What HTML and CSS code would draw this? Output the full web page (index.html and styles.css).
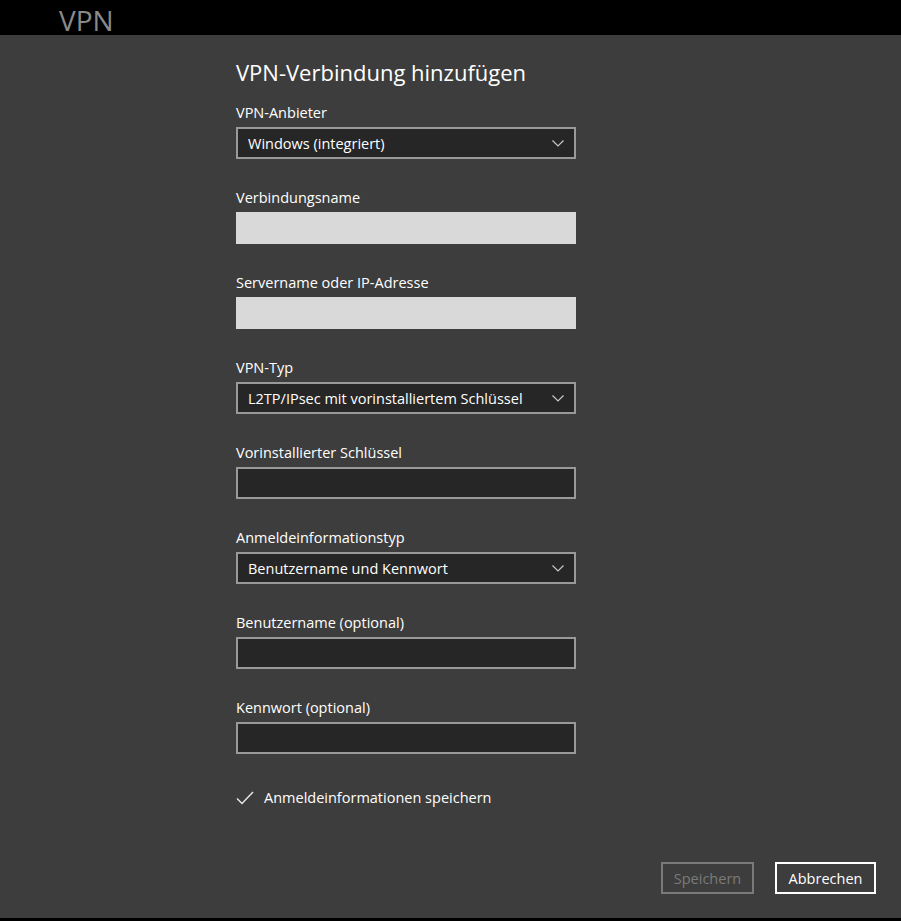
FILE: index.html
```html
<!DOCTYPE html>
<html lang="de">
<head>
    <meta charset="UTF-8">
    <title>VPN</title>
    <link rel="stylesheet" href="styles.css">
</head>
<body>
    <!-- Kopfzeile der Einstellungen -->
    <div class="topbar">
        <span class="topbar-title">VPN</span>
    </div>

    <!-- Dialog -->
    <div class="dialog">
        <div class="form">
            <h2 class="dialog-title">VPN-Verbindung hinzufügen</h2>

            <div class="field">
                <label class="field-label">VPN-Anbieter</label>
                <div class="select">
                    <span>Windows (integriert)</span>
                    <svg class="chevron" width="12" height="7" viewBox="0 0 12 7"><path d="M0.5 0.5 L6 6 L11.5 0.5" fill="none" stroke="#c8c8c8" stroke-width="1.2"/></svg>
                </div>
            </div>

            <div class="field">
                <label class="field-label">Verbindungsname</label>
                <div class="input input-light"></div>
            </div>

            <div class="field">
                <label class="field-label">Servername oder IP-Adresse</label>
                <div class="input input-light"></div>
            </div>

            <div class="field">
                <label class="field-label">VPN-Typ</label>
                <div class="select">
                    <span>L2TP/IPsec mit vorinstalliertem Schlüssel</span>
                    <svg class="chevron" width="12" height="7" viewBox="0 0 12 7"><path d="M0.5 0.5 L6 6 L11.5 0.5" fill="none" stroke="#c8c8c8" stroke-width="1.2"/></svg>
                </div>
            </div>

            <div class="field">
                <label class="field-label">Vorinstallierter Schlüssel</label>
                <div class="input"></div>
            </div>

            <div class="field">
                <label class="field-label">Anmeldeinformationstyp</label>
                <div class="select">
                    <span>Benutzername und Kennwort</span>
                    <svg class="chevron" width="12" height="7" viewBox="0 0 12 7"><path d="M0.5 0.5 L6 6 L11.5 0.5" fill="none" stroke="#c8c8c8" stroke-width="1.2"/></svg>
                </div>
            </div>

            <div class="field">
                <label class="field-label">Benutzername (optional)</label>
                <div class="input"></div>
            </div>

            <div class="field">
                <label class="field-label">Kennwort (optional)</label>
                <div class="input"></div>
            </div>

            <div class="checkbox-row">
                <svg class="check" width="18" height="14" viewBox="0 0 18 14"><path d="M1 7.5 L6 12.5 L17 1" fill="none" stroke="#e6e6e6" stroke-width="1.5"/></svg>
                <span>Anmeldeinformationen speichern</span>
            </div>
        </div>

        <div class="actions">
            <button class="btn btn-disabled">Speichern</button>
            <button class="btn btn-cancel">Abbrechen</button>
        </div>
    </div>
</body>
</html>
```

FILE: styles.css
```css
body {
    margin: 0;
    padding: 0;
    background: #000;
    font-family: "Open Sans", "Noto Sans", Arial, sans-serif;
    color: #fff;
    width: 901px;
    height: 921px;
    overflow: hidden;
}

/* Kopfzeile */
.topbar {
    height: 35px;
    background: #000;
    padding-left: 59px;
}

.topbar-title {
    display: block;
    font-size: 28px;
    line-height: 27px;
    padding-top: 7px;
    color: #8a8a8a;
}

/* Dialog */
.dialog {
    background: #3d3d3d;
    height: 883px;
    display: flex;
    flex-direction: column;
}

.form {
    width: 340px;
    margin-left: 236px;
    padding-top: 22px;
    flex: 1;
}

.dialog-title {
    font-size: 22px;
    font-weight: normal;
    line-height: 30px;
    margin: 0 0 16px 0;
}

.field {
    margin-bottom: 29px;
}

.field-label {
    display: block;
    font-size: 14.5px;
    line-height: 20px;
    margin-bottom: 4px;
}

.select,
.input {
    box-sizing: border-box;
    height: 32px;
    border: 2px solid #999;
    background: #262626;
}

.select {
    display: flex;
    align-items: center;
    justify-content: space-between;
    padding: 0 10px;
    font-size: 14.5px;
}

.input-light {
    border: none;
    background: #d9d9d9;
}

.checkbox-row {
    display: flex;
    align-items: center;
    gap: 10px;
    margin-top: 34px;
    font-size: 14.5px;
    line-height: 20px;
}

/* Schaltflächen */
.actions {
    display: flex;
    justify-content: flex-end;
    gap: 21px;
    padding: 0 25px 24px 0;
}

.btn {
    box-sizing: border-box;
    height: 32px;
    padding: 0;
    background: transparent;
    border: 2px solid #fff;
    color: #fff;
    font-family: inherit;
    font-size: 14.5px;
}

.btn-cancel {
    width: 101px;
}

.btn-disabled {
    width: 93px;
    border-color: #7a7a7a;
    color: #7a7a7a;
}
```
